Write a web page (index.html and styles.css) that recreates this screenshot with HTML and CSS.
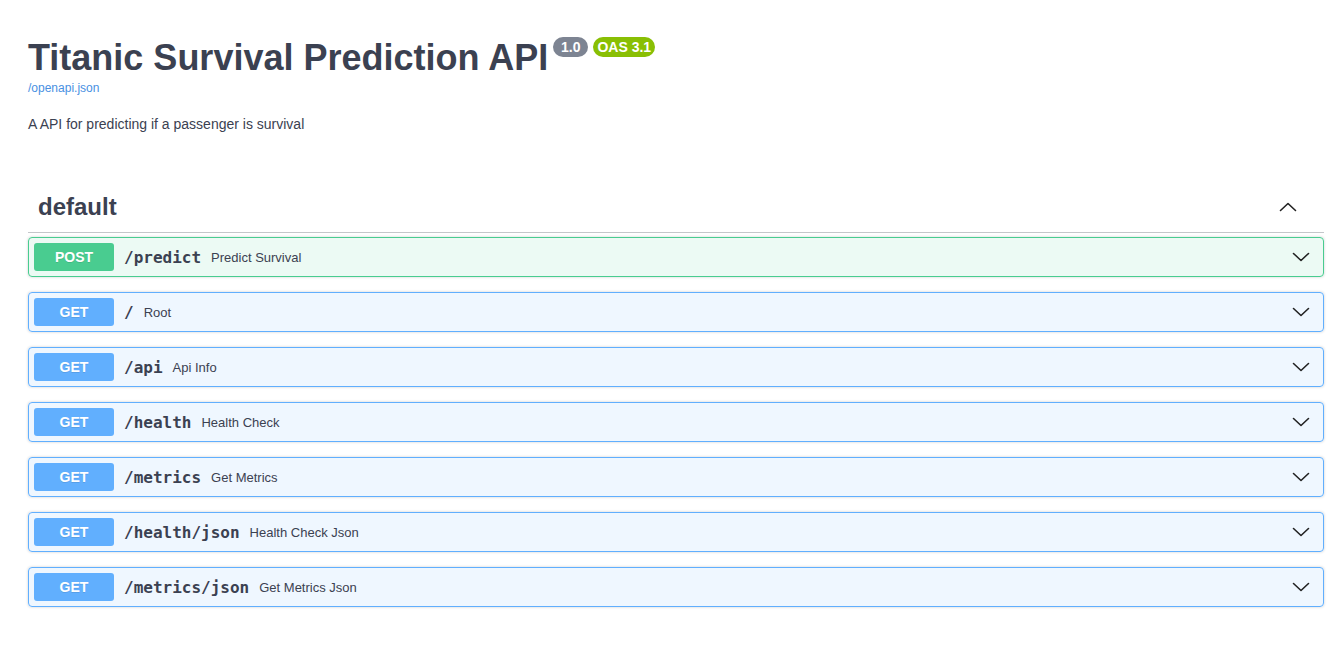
FILE: index.html
```html
<!DOCTYPE html>
<html lang="en">
<head>
<meta charset="utf-8">
<title>Titanic Survival Prediction API - Swagger UI</title>
<link rel="stylesheet" href="styles.css">
</head>
<body>
<div class="wrapper">
  <div class="info">
    <h2 class="title">
      <span class="title-text">Titanic Survival Prediction API</span>
      <small class="badge badge-version">&nbsp;1.0&nbsp;</small>
      <small class="badge badge-oas">OAS 3.1</small>
    </h2>
    <a class="spec-link" href="#">/openapi.json</a>
    <p class="description">A API for predicting if a passenger is survival</p>
  </div>

  <section class="tag-section">
    <h3 class="tag-head">
      <span class="tag-name">default</span>
      <svg class="arrow arrow-up" width="20" height="20" viewBox="0 0 20 20" aria-hidden="true"><polyline points="2.5,13.5 10,6.5 17.5,13.5"/></svg>
    </h3>

    <div class="op op-post">
      <span class="method">POST</span>
      <span class="path">/predict</span>
      <span class="summary">Predict Survival</span>
      <svg class="arrow" width="20" height="20" viewBox="0 0 20 20" aria-hidden="true"><polyline points="2.5,6.5 10,13.5 17.5,6.5"/></svg>
    </div>
    <div class="op op-get">
      <span class="method">GET</span>
      <span class="path">/</span>
      <span class="summary">Root</span>
      <svg class="arrow" width="20" height="20" viewBox="0 0 20 20" aria-hidden="true"><polyline points="2.5,6.5 10,13.5 17.5,6.5"/></svg>
    </div>
    <div class="op op-get">
      <span class="method">GET</span>
      <span class="path">/api</span>
      <span class="summary">Api Info</span>
      <svg class="arrow" width="20" height="20" viewBox="0 0 20 20" aria-hidden="true"><polyline points="2.5,6.5 10,13.5 17.5,6.5"/></svg>
    </div>
    <div class="op op-get">
      <span class="method">GET</span>
      <span class="path">/health</span>
      <span class="summary">Health Check</span>
      <svg class="arrow" width="20" height="20" viewBox="0 0 20 20" aria-hidden="true"><polyline points="2.5,6.5 10,13.5 17.5,6.5"/></svg>
    </div>
    <div class="op op-get">
      <span class="method">GET</span>
      <span class="path">/metrics</span>
      <span class="summary">Get Metrics</span>
      <svg class="arrow" width="20" height="20" viewBox="0 0 20 20" aria-hidden="true"><polyline points="2.5,6.5 10,13.5 17.5,6.5"/></svg>
    </div>
    <div class="op op-get">
      <span class="method">GET</span>
      <span class="path">/health/json</span>
      <span class="summary">Health Check Json</span>
      <svg class="arrow" width="20" height="20" viewBox="0 0 20 20" aria-hidden="true"><polyline points="2.5,6.5 10,13.5 17.5,6.5"/></svg>
    </div>
    <div class="op op-get">
      <span class="method">GET</span>
      <span class="path">/metrics/json</span>
      <span class="summary">Get Metrics Json</span>
      <svg class="arrow" width="20" height="20" viewBox="0 0 20 20" aria-hidden="true"><polyline points="2.5,6.5 10,13.5 17.5,6.5"/></svg>
    </div>
  </section>
</div>
</body>
</html>
```

FILE: styles.css
```css
html, body {
  margin: 0;
  padding: 0;
  background: #ffffff;
}

body {
  font-family: "Liberation Sans", Arial, sans-serif;
  color: #3b4151;
}

.wrapper {
  padding: 0 20px 0 28px;
}

.info {
  padding-top: 37px;
}

.title {
  display: flex;
  align-items: flex-start;
  margin: 0;
  font-size: 36px;
  line-height: 41px;
  font-weight: 700;
  color: #3b4151;
}

.badge {
  display: inline-block;
  margin-left: 5px;
  padding: 2px 4px;
  border-radius: 57px;
  font-size: 14px;
  line-height: 16px;
  font-weight: 700;
  color: #ffffff;
  white-space: pre;
}

.badge-version {
  background: #7d8492;
}

.badge-oas {
  background: #89bf04;
}

.spec-link {
  display: block;
  margin-top: 3px;
  font-size: 12px;
  line-height: 14px;
  color: #4990e2;
  text-decoration: none;
}

.description {
  margin: 21px 0 0;
  font-size: 14px;
  line-height: 16px;
  color: #3b4151;
}

.tag-section {
  margin-top: 49px;
}

.tag-head {
  display: flex;
  align-items: center;
  justify-content: space-between;
  height: 31px;
  margin: 0 0 4px;
  padding: 10px 26px 10px 10px;
  border-bottom: 1px solid rgba(59, 65, 81, 0.3);
  font-size: 24px;
  font-weight: 700;
  color: #3b4151;
}

.tag-name {
  line-height: 28px;
}

.arrow {
  flex: none;
  fill: none;
  stroke: #222222;
  stroke-width: 1.6;
  stroke-linecap: round;
  stroke-linejoin: round;
}

.op {
  display: flex;
  align-items: center;
  height: 28px;
  padding: 5px 12px 5px 5px;
  margin-bottom: 15px;
  border: 1px solid;
  border-radius: 4px;
  box-shadow: 0 0 3px rgba(0, 0, 0, 0.19);
}

.op-post {
  background: rgba(73, 204, 144, 0.1);
  border-color: #49cc90;
}

.op-get {
  background: rgba(97, 175, 254, 0.1);
  border-color: #61affe;
}

.method {
  width: 80px;
  height: 28px;
  line-height: 28px;
  border-radius: 3px;
  text-align: center;
  font-size: 14px;
  font-weight: 700;
  color: #ffffff;
  text-shadow: 0 1px 0 rgba(0, 0, 0, 0.1);
}

.op-post .method {
  background: #49cc90;
}

.op-get .method {
  background: #61affe;
}

.path {
  padding: 0 10px;
  font-family: "DejaVu Sans Mono", "Liberation Mono", monospace;
  font-size: 16px;
  font-weight: 700;
  color: #3b4151;
}

.summary {
  flex: 1;
  font-size: 13px;
  color: #3b4151;
}
```
